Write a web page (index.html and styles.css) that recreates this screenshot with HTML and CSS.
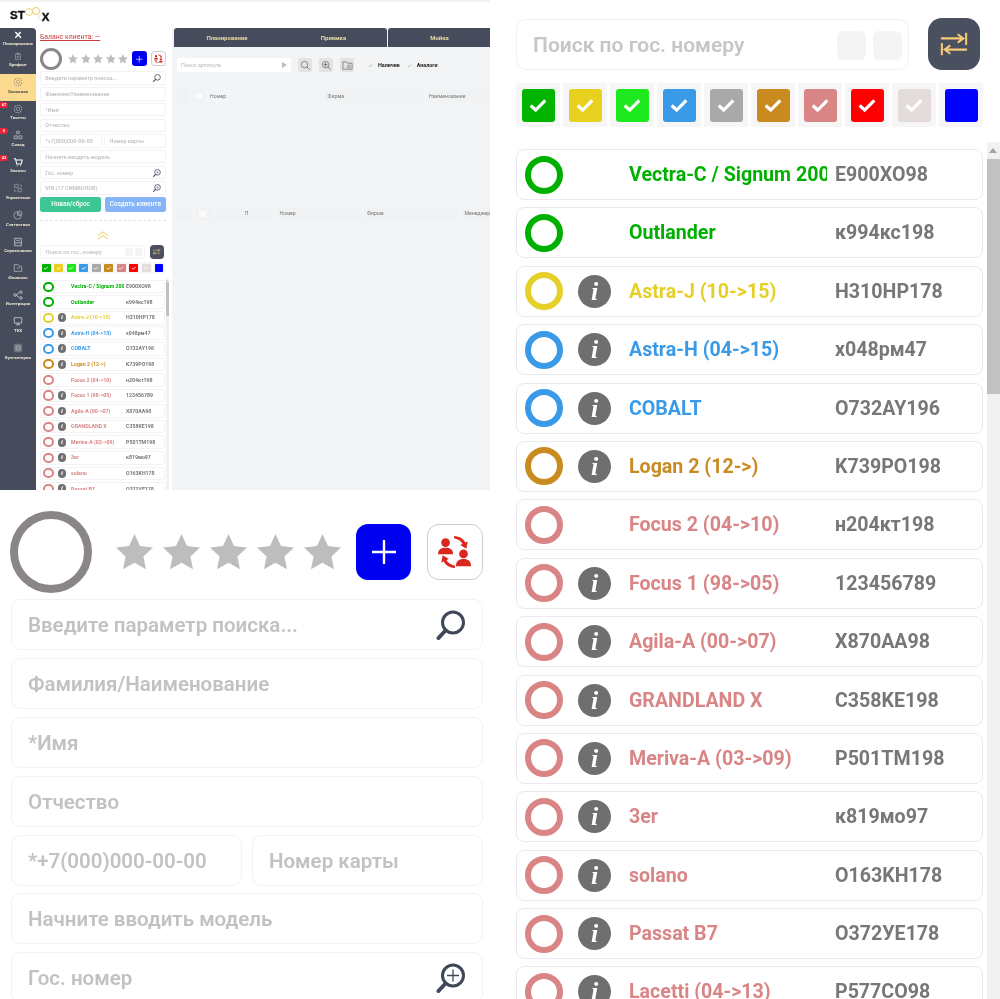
FILE: index.html
```html
<!DOCTYPE html>
<html lang="ru">
<head>
<meta charset="utf-8">
<title>STOOX</title>
<link rel="stylesheet" href="styles.css">
</head>
<body>
<svg class="sprite" aria-hidden="true">
  <symbol id="i-star" viewBox="1.200 1.500 21.600 21.600"><path d="M12 1.500l3.200 7 7.600.9-5.600 5.200 1.500 7.500-6.700-3.800-6.700 3.800 1.500-7.500L1.200 9.400l7.600-.9z"/></symbol>
  <symbol id="i-search" viewBox="0 0 30 30"><circle cx="17" cy="12.500" r="10.500" fill="none" stroke="#3f4759" stroke-width="3"/><path d="M9.500 20.500L2.500 28" stroke="#3f4759" stroke-width="4" stroke-linecap="round"/></symbol>
  <symbol id="i-search-plus" viewBox="0 0 30 30"><circle cx="17" cy="12.500" r="10.500" fill="none" stroke="#3f4759" stroke-width="3"/><path d="M9.500 20.500L2.500 28" stroke="#3f4759" stroke-width="4" stroke-linecap="round"/><path d="M17 6.500v12M11 12.500h12" stroke="#3f4759" stroke-width="1.300"/></symbol>
  <symbol id="i-plus" viewBox="0 0 24 24"><path d="M12 3v18M3 12h18" stroke="#fff" stroke-width="1.800" fill="none"/></symbol>
  <symbol id="i-users" viewBox="0 0 36 36"><g fill="#d9281e"><circle cx="8" cy="8" r="4.600"/><path d="M0 20.500c0-5 3-7 8-7s8 2 8 7z"/><circle cx="27" cy="20" r="4.600"/><path d="M19 33c0-5 3-7.500 8-7.500s8 2.500 8 7.500z"/><path d="M17 1c6 .5 10 3 12 7l2.500-1L30 14.500l-6.500-4 2.500-1C24.500 6.500 21.500 4.500 17 3.500z"/><path d="M18 35c-6-.5-10-3-12-7l-2.500 1L5 21.500l6.500 4-2.500 1c1.500 3 4.500 5 9 6z"/></g></symbol>
  <symbol id="i-swap" viewBox="0 0 30 30"><g stroke="#f6c877" fill="none" stroke-width="2.200"><path d="M1 9h24M19 4.500l6 4.500-6 4.500"/><path d="M28 3v13"/><path d="M29 21H5M11 16.500L5 21l6 4.500"/><path d="M2 14v13"/></g></symbol>
  <symbol id="i-check" viewBox="0 0 24 24"><path d="M4 12.500l5.500 5L20 7" fill="none" stroke="currentColor" stroke-width="3.500"/></symbol>
  <symbol id="i-chev" viewBox="0 0 24 18"><path d="M2 9l10-7 10 7M2 16l10-7 10 7" fill="none" stroke="#f6d78f" stroke-width="2.500"/></symbol>
  <symbol id="n-tools" viewBox="0 0 24 24"><path d="M4 3l17 17M20 3L4 20" stroke="#fff" stroke-width="4.500" fill="none"/></symbol>
  <symbol id="n-doc" viewBox="0 0 24 24"><path d="M5 5h14v16H5zM9 3h6v4H9zM8 12h8M8 16h8" fill="none" stroke="#9ca0a8" stroke-width="1.800"/></symbol>
  <symbol id="n-gear" viewBox="0 0 24 24"><circle cx="12" cy="12" r="4" fill="none" stroke="currentColor" stroke-width="1.800"/><circle cx="12" cy="12" r="9" fill="none" stroke="currentColor" stroke-width="2.500" stroke-dasharray="3.500 2"/></symbol>
  <symbol id="n-stock" viewBox="0 0 24 24"><path d="M9 3h6v6H9zM3 14h7v7H3zM14 14h7v7h-7z" fill="none" stroke="#c3c5ca" stroke-width="1.800"/></symbol>
  <symbol id="n-cart" viewBox="0 0 24 24"><path d="M2 4h4l3 13h11l2-10H7M9 21h2M17 21h2" fill="none" stroke="#fff" stroke-width="2.500"/></symbol>
  <symbol id="n-manage" viewBox="0 0 24 24"><path d="M4 3h8v8H4zM12 13h8v8h-8zM16 5h4v5M4 15v5h4" fill="none" stroke="#9ca0a8" stroke-width="1.800"/></symbol>
  <symbol id="n-pie" viewBox="0 0 24 24"><path d="M11 4a9 9 0 1 0 9 9h-9zM14 2a8 8 0 0 1 8 8h-8z" fill="none" stroke="#b4b7bd" stroke-width="1.800"/></symbol>
  <symbol id="n-book" viewBox="0 0 24 24"><path d="M4 3h16v18H4zM8 8h8M4 14h16" fill="none" stroke="#c3c5ca" stroke-width="2"/></symbol>
  <symbol id="n-folder" viewBox="0 0 24 24"><path d="M3 20V4h10l3 4h5v12zM9 12h8" fill="none" stroke="#b4b7bd" stroke-width="1.800"/></symbol>
  <symbol id="n-share" viewBox="0 0 24 24"><g fill="none" stroke="#d4d6da" stroke-width="1.800"><circle cx="5" cy="12" r="3"/><circle cx="19" cy="5" r="3"/><circle cx="19" cy="19" r="3"/><path d="M8 11l8-5M8 13l8 5"/></g></symbol>
  <symbol id="n-screen" viewBox="0 0 24 24"><path d="M3 4h18v13H3zM12 17v4M7 21h10" fill="none" stroke="#d4d6da" stroke-width="1.800"/></symbol>
  <symbol id="n-calc" viewBox="0 0 24 24"><rect x="2" y="2" width="20" height="20" rx="4" fill="#71767f"/><circle cx="12" cy="12" r="5" fill="none" stroke="#b5b8bc" stroke-width="2"/></symbol>
  <symbol id="t-zoom" viewBox="0 0 24 24"><circle cx="10" cy="10" r="7" fill="none" stroke="#666" stroke-width="1.600"/><path d="M15 15l6 6" stroke="#666" stroke-width="1.800"/></symbol>
  <symbol id="t-zoomp" viewBox="0 0 24 24"><circle cx="10" cy="10" r="7" fill="none" stroke="#666" stroke-width="1.600"/><path d="M15 15l6 6M10 6v8M6 10h8" stroke="#666" stroke-width="1.800"/></symbol>
  <symbol id="t-folder" viewBox="0 0 24 24"><path d="M2 20V4h8l2 3h10v13zM12 14a3 3 0 1 0 6 0 3 3 0 0 0-6 0" fill="none" stroke="#666" stroke-width="1.500"/></symbol>
</svg>

<div class="sheet">
  <div class="left-col">
    <section class="panel overview">
      <header class="app-head">
        <div class="logo"><span>ST</span><i class="logo-o"></i><i class="logo-o logo-o2"></i><i class="logo-o logo-o3"></i><span class="logo-x">X</span></div>
      </header>
      <div class="app-body">
        <nav class="side">
          <a class="nav first"><svg class="nav-i"><use href="#n-tools"/></svg><span>Планирование</span></a>
          <a class="nav second"><svg class="nav-i"><use href="#n-doc"/></svg><span>Брифинг</span></a>
          <a class="nav active"><svg class="nav-i"><use href="#n-gear"/></svg><span>Основная</span></a>
          <a class="nav"><b class="badge">67</b><svg class="nav-i"><use href="#n-gear"/></svg><span>Тикеты</span></a>
          <a class="nav"><b class="badge">6</b><svg class="nav-i"><use href="#n-stock"/></svg><span>Склад</span></a>
          <a class="nav"><b class="badge">43</b><svg class="nav-i"><use href="#n-cart"/></svg><span>Заказы</span></a>
          <a class="nav"><svg class="nav-i"><use href="#n-manage"/></svg><span>Управление</span></a>
          <a class="nav"><svg class="nav-i"><use href="#n-pie"/></svg><span>Статистика</span></a>
          <a class="nav"><svg class="nav-i"><use href="#n-book"/></svg><span>Справочники</span></a>
          <a class="nav"><svg class="nav-i"><use href="#n-folder"/></svg><span>Финансы</span></a>
          <a class="nav"><svg class="nav-i"><use href="#n-share"/></svg><span>Интеграции</span></a>
          <a class="nav"><svg class="nav-i"><use href="#n-screen"/></svg><span>ТЕХ</span></a>
          <a class="nav"><svg class="nav-i"><use href="#n-calc"/></svg><span>Бухгалтерия</span></a>
        </nav>

        <div class="client">
          <a class="balance">Баланс клиента: —</a>
          <div class="form tiny">
            <div class="form-top">
              <div class="big-ring"></div>
              <div class="stars"><svg><use href="#i-star"/></svg><svg><use href="#i-star"/></svg><svg><use href="#i-star"/></svg><svg><use href="#i-star"/></svg><svg><use href="#i-star"/></svg></div>
              <div class="btn-plus"><svg><use href="#i-plus"/></svg></div>
              <div class="btn-users"><svg><use href="#i-users"/></svg></div>
            </div>
            <div class="field"><span>Введите параметр поиска...</span><svg class="f-icon"><use href="#i-search"/></svg></div>
            <div class="field"><span>Фамилия/Наименование</span></div>
            <div class="field"><span>*Имя</span></div>
            <div class="field"><span>Отчество</span></div>
            <div class="field-pair"><div class="field"><span>*+7(000)000-00-00</span></div><div class="field"><span>Номер карты</span></div></div>
            <div class="field"><span>Начните вводить модель</span></div>
            <div class="field"><span>Гос. номер</span><svg class="f-icon"><use href="#i-search-plus"/></svg></div>
            <div class="field"><span>VIN (17 СИМВОЛОВ)</span><svg class="f-icon"><use href="#i-search-plus"/></svg></div>
            <div class="actions"><div class="act act-green">Новая/сброс</div><div class="act act-blue">Создать клиента</div></div>
          </div>
          <div class="divider"></div>
          <svg class="chev"><use href="#i-chev"/></svg>
          <div class="plates tiny short">
            <div class="plate-search">
              <div class="plate-input"><span>Поиск по гос. номеру</span><i class="sq"></i><i class="sq"></i></div>
              <div class="btn-swap"><svg><use href="#i-swap"/></svg></div>
            </div>
            <div class="swatches">
              <div class="cell"><i class="sw s1"><svg><use href="#i-check"/></svg></i></div>
              <div class="cell"><i class="sw s2"><svg><use href="#i-check"/></svg></i></div>
              <div class="cell"><i class="sw s3"><svg><use href="#i-check"/></svg></i></div>
              <div class="cell"><i class="sw s4"><svg><use href="#i-check"/></svg></i></div>
              <div class="cell"><i class="sw s5"><svg><use href="#i-check"/></svg></i></div>
              <div class="cell"><i class="sw s6"><svg><use href="#i-check"/></svg></i></div>
              <div class="cell"><i class="sw s7"><svg><use href="#i-check"/></svg></i></div>
              <div class="cell"><i class="sw s8"><svg><use href="#i-check"/></svg></i></div>
              <div class="cell"><i class="sw s9"><svg><use href="#i-check"/></svg></i></div>
              <div class="cell"><i class="sw s10"></i></div>
            </div>
            <div class="list-wrap">
              <div class="list">
                <div class="row c1"><i class="ring"></i><i class="info none">i</i><span class="name">Vectra-C / Signum 2002</span><span class="num">E900XO98</span></div>
                <div class="row c1"><i class="ring"></i><i class="info none">i</i><span class="name">Outlander</span><span class="num">к994кс198</span></div>
                <div class="row c2"><i class="ring"></i><i class="info">i</i><span class="name">Astra-J (10-&gt;15)</span><span class="num">H310HP178</span></div>
                <div class="row c4"><i class="ring"></i><i class="info">i</i><span class="name">Astra-H (04-&gt;15)</span><span class="num">x048рм47</span></div>
                <div class="row c4"><i class="ring"></i><i class="info">i</i><span class="name">COBALT</span><span class="num">O732AY196</span></div>
                <div class="row c6"><i class="ring"></i><i class="info">i</i><span class="name">Logan 2 (12-&gt;)</span><span class="num">K739PO198</span></div>
                <div class="row c7"><i class="ring"></i><i class="info none">i</i><span class="name">Focus 2 (04-&gt;10)</span><span class="num">н204кт198</span></div>
                <div class="row c7"><i class="ring"></i><i class="info">i</i><span class="name">Focus 1 (98-&gt;05)</span><span class="num">123456789</span></div>
                <div class="row c7"><i class="ring"></i><i class="info">i</i><span class="name">Agila-A (00-&gt;07)</span><span class="num">X870AA98</span></div>
                <div class="row c7"><i class="ring"></i><i class="info">i</i><span class="name">GRANDLAND X</span><span class="num">C358KE198</span></div>
                <div class="row c7"><i class="ring"></i><i class="info">i</i><span class="name">Meriva-A (03-&gt;09)</span><span class="num">P501TM198</span></div>
                <div class="row c7"><i class="ring"></i><i class="info">i</i><span class="name">3er</span><span class="num">к819мо97</span></div>
                <div class="row c7"><i class="ring"></i><i class="info">i</i><span class="name">solano</span><span class="num">O163KH178</span></div>
                <div class="row c7"><i class="ring"></i><i class="info">i</i><span class="name">Passat B7</span><span class="num">O372УЕ178</span></div>
              </div>
              <div class="scroll"><i class="arrow"></i><i class="thumb"></i></div>
            </div>
          </div>
        </div>

        <main class="main">
          <div class="tabs">
            <div class="tab tab-a">Планирование</div>
            <div class="tab tab-b">Приемка</div>
            <div class="tab tab-c">Мойка</div>
          </div>
          <div class="tools">
            <div class="art"><span>Поиск артикула</span><i class="play"></i></div>
            <div class="tool"><svg><use href="#t-zoom"/></svg></div>
            <div class="tool"><svg><use href="#t-zoomp"/></svg></div>
            <div class="tool"><svg><use href="#t-folder"/></svg></div>
            <label class="opt"><svg><use href="#i-check"/></svg>Наличие</label>
            <label class="opt"><svg><use href="#i-check"/></svg>Аналоги</label>
          </div>
          <div class="thead one">
            <div class="th w12"></div>
            <div class="th w12"><i class="box"></i></div>
            <div class="th w116 tint">Номер</div>
            <div class="th w99">Фирма</div>
            <div class="th wrest">Наименование</div>
          </div>
          <div class="thead two">
            <div class="th w16"></div>
            <div class="th w18"><i class="box"></i></div>
            <div class="th w58 center">П</div>
            <div class="th w85">Номер</div>
            <div class="th w95">Фирма</div>
            <div class="th wrest">Менеджер</div>
          </div>
        </main>
      </div>
    </section>

    <section class="panel client-zoom">
      <div class="form">
        <div class="form-top">
          <div class="big-ring"></div>
          <div class="stars"><svg><use href="#i-star"/></svg><svg><use href="#i-star"/></svg><svg><use href="#i-star"/></svg><svg><use href="#i-star"/></svg><svg><use href="#i-star"/></svg></div>
          <div class="btn-plus"><svg><use href="#i-plus"/></svg></div>
          <div class="btn-users"><svg><use href="#i-users"/></svg></div>
        </div>
        <div class="field"><span>Введите параметр поиска...</span><svg class="f-icon"><use href="#i-search"/></svg></div>
        <div class="field"><span>Фамилия/Наименование</span></div>
        <div class="field"><span>*Имя</span></div>
        <div class="field"><span>Отчество</span></div>
        <div class="field-pair"><div class="field"><span>*+7(000)000-00-00</span></div><div class="field"><span>Номер карты</span></div></div>
        <div class="field"><span>Начните вводить модель</span></div>
        <div class="field"><span>Гос. номер</span><svg class="f-icon"><use href="#i-search-plus"/></svg></div>
      </div>
    </section>
  </div>

  <section class="panel plates-zoom">
    <div class="plates">
      <div class="plate-search">
        <div class="plate-input"><span>Поиск по гос. номеру</span><i class="sq"></i><i class="sq"></i></div>
        <div class="btn-swap"><svg><use href="#i-swap"/></svg></div>
      </div>
      <div class="swatches">
        <div class="cell"><i class="sw s1"><svg><use href="#i-check"/></svg></i></div>
        <div class="cell"><i class="sw s2"><svg><use href="#i-check"/></svg></i></div>
        <div class="cell"><i class="sw s3"><svg><use href="#i-check"/></svg></i></div>
        <div class="cell"><i class="sw s4"><svg><use href="#i-check"/></svg></i></div>
        <div class="cell"><i class="sw s5"><svg><use href="#i-check"/></svg></i></div>
        <div class="cell"><i class="sw s6"><svg><use href="#i-check"/></svg></i></div>
        <div class="cell"><i class="sw s7"><svg><use href="#i-check"/></svg></i></div>
        <div class="cell"><i class="sw s8"><svg><use href="#i-check"/></svg></i></div>
        <div class="cell"><i class="sw s9"><svg><use href="#i-check"/></svg></i></div>
        <div class="cell"><i class="sw s10"></i></div>
      </div>
      <div class="list-wrap">
        <div class="list">
          <div class="row c1"><i class="ring"></i><i class="info none">i</i><span class="name">Vectra-C / Signum 2002</span><span class="num">E900XO98</span></div>
          <div class="row c1"><i class="ring"></i><i class="info none">i</i><span class="name">Outlander</span><span class="num">к994кс198</span></div>
          <div class="row c2"><i class="ring"></i><i class="info">i</i><span class="name">Astra-J (10-&gt;15)</span><span class="num">H310HP178</span></div>
          <div class="row c4"><i class="ring"></i><i class="info">i</i><span class="name">Astra-H (04-&gt;15)</span><span class="num">x048рм47</span></div>
          <div class="row c4"><i class="ring"></i><i class="info">i</i><span class="name">COBALT</span><span class="num">O732AY196</span></div>
          <div class="row c6"><i class="ring"></i><i class="info">i</i><span class="name">Logan 2 (12-&gt;)</span><span class="num">K739PO198</span></div>
          <div class="row c7"><i class="ring"></i><i class="info none">i</i><span class="name">Focus 2 (04-&gt;10)</span><span class="num">н204кт198</span></div>
          <div class="row c7"><i class="ring"></i><i class="info">i</i><span class="name">Focus 1 (98-&gt;05)</span><span class="num">123456789</span></div>
          <div class="row c7"><i class="ring"></i><i class="info">i</i><span class="name">Agila-A (00-&gt;07)</span><span class="num">X870AA98</span></div>
          <div class="row c7"><i class="ring"></i><i class="info">i</i><span class="name">GRANDLAND X</span><span class="num">C358KE198</span></div>
          <div class="row c7"><i class="ring"></i><i class="info">i</i><span class="name">Meriva-A (03-&gt;09)</span><span class="num">P501TM198</span></div>
          <div class="row c7"><i class="ring"></i><i class="info">i</i><span class="name">3er</span><span class="num">к819мо97</span></div>
          <div class="row c7"><i class="ring"></i><i class="info">i</i><span class="name">solano</span><span class="num">O163KH178</span></div>
          <div class="row c7"><i class="ring"></i><i class="info">i</i><span class="name">Passat B7</span><span class="num">O372УЕ178</span></div>
          <div class="row c7"><i class="ring"></i><i class="info">i</i><span class="name">Lacetti (04-&gt;13)</span><span class="num">P577CO98</span></div>
        </div>
        <div class="scroll"><i class="arrow"></i><i class="thumb"></i></div>
      </div>
    </div>
  </section>
</div>
</body>
</html>
```

FILE: styles.css
```css
* { box-sizing: border-box; }
html, body { margin: 0; padding: 0; background: #fff; }
body { font-family: Roboto, "Noto Sans", sans-serif; overflow: hidden; }
i { font-style: normal; }
.sprite { position: absolute; width: 0; height: 0; }

.sheet { display: grid; grid-template-columns: 490px 510px; width: 1000px; height: 999px; overflow: hidden; }
.left-col { display: grid; grid-template-rows: 490px 509px; min-width: 0; }
.panel { overflow: hidden; background: #fff; min-width: 0; filter: blur(.45px); }
.overview { filter: blur(.55px); }

/* Overview screenshot */
.overview { display: flex; flex-direction: column; }
.app-head { height: 28px; flex: none; border-top: 2px solid #f3f3f4; padding: 6px 0 0 10px; }
.logo { display: flex; align-items: center; height: 14px; font: 700 11.500px/14px "Liberation Sans", sans-serif; color: #111; -webkit-text-stroke: .4px #111; }
.logo-o { width: 8px; height: 8px; border: 1.300px solid #eed27e; border-radius: 50%; margin: -6px -1px 0 0; flex: none; }
.logo-o2 { margin-top: -9px; border-color: #efc96b; }
.logo-o3 { margin: 3px -2px 0 -1px; width: 6px; height: 6px; border-color: #dfe1e4; }
.logo-x { margin: 3px 0 0 0; }
.app-body { flex: 1; display: flex; min-height: 0; }

.side { width: 36px; flex: none; background: #474c5c; border-radius: 0 4px 0 0; display: flex; flex-direction: column; }
.nav { position: relative; height: 26.600px; flex: none; display: flex; flex-direction: column; align-items: center; justify-content: flex-end; padding-bottom: 7px; color: #9ca0a8; }
.nav span { font-size: 4.400px; line-height: 5px; font-weight: 700; color: #e8e2cf; white-space: nowrap; }
.nav.first { height: 24px; padding-bottom: 6.500px; }
.nav.first .nav-i { width: 8px; height: 8px; }
.nav.second { height: 22px; }
.nav-i { width: 10px; height: 10px; margin-bottom: 1.500px; }
.nav.active { background: #fbd98f; color: #a99f87; }
.nav.active span { color: #55534d; }
.badge { position: absolute; left: 0; top: 1px; min-width: 8px; height: 6px; padding: 0 1px; border-radius: 0 3px 3px 0; background: #e8253a; color: #fff; font-size: 4px; line-height: 6px; text-align: center; }

.client { width: 136px; flex: none; padding: 4px 0 0 4px; overflow: hidden; }
.balance { display: block; height: 16px; font-size: 6.900px; line-height: 10px; color: #c84040; text-decoration: underline; white-space: nowrap; }
.tiny { zoom: .2667; }
.tiny .big-ring { border-width: 11.300px; }
.tiny .ring { border-width: 7.600px; }
.tiny .row, .tiny .field, .tiny .plate-input { border-color: #f3f3f7; }
.divider { width: 126px; height: 0; margin-top: 8px; border-top: 1px dashed #dfe3ea; }
.chev { display: block; width: 12px; height: 9px; margin: 10px 0 5px 57px; }
.plates.tiny { margin-left: 1px; }

.main { flex: 1; min-width: 0; background: #f3f4f5; padding-left: 2px; overflow: hidden; }
.tabs { display: flex; height: 19px; }
.tab { background: #474c5c; color: #e7d9a4; font-size: 6px; font-weight: 700; line-height: 19px; text-align: center; flex: none; }
.tab-a { width: 106px; border-radius: 3px 0 0 0; }
.tab-b { width: 107px; border-radius: 0 3px 0 0; }
.tab-c { width: 103px; margin-left: 1px; border-radius: 3px 0 0 0; }
.tools { display: flex; align-items: center; height: 14px; margin: 11px 0 0 3px; }
.art { width: 114px; height: 14px; background: #fff; display: flex; align-items: center; justify-content: space-between; padding: 0 4px; font-size: 5.400px; color: #b9b9b9; border-radius: 2px; }
.play { width: 0; height: 0; border-left: 5px solid #bdbdbd; border-top: 3px solid transparent; border-bottom: 3px solid transparent; }
.tool { width: 14px; height: 14px; background: #e3e3e4; border-radius: 2px; margin-left: 7px; display: flex; align-items: center; justify-content: center; }
.tool svg { width: 11px; height: 11px; }
.opt { display: flex; align-items: center; font-size: 5.400px; font-weight: 700; margin-left: 7px; white-space: nowrap; color: #1a1a1a; }
.opt svg { width: 5px; height: 5px; color: #64c9a4; margin-right: 5px; }
.opt:nth-of-type(1) { margin-left: 14px; }
.thead { display: flex; gap: 2.500px; margin-left: 3px; font-size: 5.200px; color: #777; white-space: nowrap; }
.thead.one { height: 12px; margin-top: 18px; line-height: 12px; }
.thead.two { height: 13px; margin-top: 105px; line-height: 13px; }
.th { background: #f0f2f4; padding-left: 3px; flex: none; display: flex; align-items: center; justify-content: flex-start; }
.w12 { width: 12px; }
.w16 { width: 16px; }
.w18 { width: 18px; }
.w58 { width: 58px; }
.w85 { width: 85px; }
.w95 { width: 95px; }
.w99 { width: 99px; }
.w116 { width: 116px; }
.wrest { width: 90px; }
.tint { background: #f1f6fb; padding-left: 4px; }
.center { justify-content: center; }
.box { display: block; width: 7px; height: 6px; background: #fbfbfb; }

/* Client form */
.form { width: 472px; }
.form-top { display: flex; align-items: center; height: 82px; margin-bottom: 6px; margin-left: -1px; }
.big-ring { width: 82px; height: 82px; border: 8px solid #8a8685; border-radius: 50%; flex: none; margin-right: 24px; }
.stars { display: flex; gap: 10px; margin-right: 15px; }
.stars svg { width: 37px; height: 37px; fill: #bdbdbd; display: block; }
.btn-plus { width: 55px; height: 56px; background: #0000f0; border-radius: 12px; margin-right: 16px; display: flex; align-items: center; justify-content: center; flex: none; }
.btn-plus svg { width: 32px; height: 32px; }
.btn-users { width: 56px; height: 56px; background: #fff; border: 1.500px solid #cdcdcd; border-radius: 12px; display: flex; align-items: center; justify-content: center; flex: none; }
.btn-users svg { width: 34px; height: 36px; }
.field { height: 51px; margin-bottom: 7.900px; padding: 1px 16px 0 16px; border: 1.500px solid #f2f2f3; border-radius: 9px; display: flex; align-items: center; justify-content: space-between; font-size: 20.500px; font-weight: 600; color: #c2c2c2; white-space: nowrap; background: #fff; }
.f-icon { width: 30px; height: 30px; flex: none; }
.field-pair { display: flex; gap: 10px; }
.field-pair .field:first-child { width: 231px; flex: none; }
.field-pair .field:last-child { flex: 1; }
.actions { display: flex; gap: 14px; }
.act { flex: 1; height: 56px; border-radius: 8px; color: #fff; font-size: 24px; font-weight: 500; line-height: 56px; text-align: center; white-space: nowrap; }
.act-green { background: #3ec795; }
.act-blue { background: #85b5f8; }

/* Plate list */
.plates { width: 484px; }
.plate-search { display: flex; align-items: center; width: 464px; height: 52px; }
.plate-input { width: 393px; height: 51px; border: 1.500px solid #f0f0f2; border-radius: 10px; display: flex; align-items: center; padding: 1px 6px 0 16px; font-size: 21px; font-weight: 600; color: #c6c6c6; white-space: nowrap; }
.plate-input span { flex: 1; }
.sq { width: 29px; height: 29px; background: #f4f4f4; border-radius: 6px; margin-left: 7px; flex: none; }
.btn-swap { width: 52px; height: 52px; margin-left: 19px; background: #4a5060; border-radius: 14px; display: flex; align-items: center; justify-content: center; flex: none; }
.btn-swap svg { width: 28px; height: 28px; }
.swatches { display: flex; gap: 3px; margin-top: 13px; }
.cell { width: 44px; height: 44px; background: #f6f6f7; display: flex; align-items: center; justify-content: center; flex: none; }
.sw { width: 33px; height: 33px; border-radius: 3px; color: #fff; display: flex; align-items: center; justify-content: center; }
.sw svg { width: 22px; height: 22px; }
.s1 { background: #00b400; }
.s2 { background: #e8d01f; }
.s3 { background: #1ee81e; }
.s4 { background: #3a9ae8; }
.s5 { background: #a9a9a9; }
.s6 { background: #c98b20; }
.s7 { background: #d98586; }
.s8 { background: #ff0000; }
.s9 { background: #e3dcda; }
.s10 { background: #0000ff; }
.list-wrap { display: flex; gap: 4px; margin-top: 15px; }
.list { width: 467px; padding-top: 7px; flex: none; display: flex; flex-direction: column; gap: 7.400px; }
.row { height: 51px; flex: none; border: 1.500px solid #e8e9f1; border-radius: 8px; display: flex; align-items: center; padding: 1px 0 0 8px; background: #fff; font-size: 19.600px; font-weight: 700; line-height: 26px; white-space: nowrap; }
.ring { width: 38px; height: 38px; border: 6px solid currentColor; border-radius: 50%; flex: none; margin: -1px 15px 0 0; }
.info { width: 33px; height: 33px; border-radius: 50%; background: #6f6f6f; color: #fff; font: italic 700 26px/33px "Liberation Serif", serif; text-align: center; flex: none; margin: -1px 18px 0 0; }
.info.none { visibility: hidden; }
.name { width: 198px; overflow: hidden; flex: none; margin-right: 8px; }
.num { color: #777; }
.c1 { color: #00b000; }
.c2 { color: #e5d02a; }
.c4 { color: #3a9ae8; }
.c6 { color: #c98b20; }
.c7 { color: #d98586; }
.scroll { width: 13px; flex: none; background: #f1f1f1; height: 900px; position: relative; }
.arrow { position: absolute; left: 2px; top: 6px; width: 0; height: 0; border-left: 4.500px solid transparent; border-right: 4.500px solid transparent; border-bottom: 5px solid #a3a3a3; }
.thumb { position: absolute; left: 0; top: 17px; width: 13px; height: 235px; background: #c1c1c1; }
.short .thumb { height: 124px; }

.client-zoom { padding: 21px 0 0 11px; }
.plates-zoom { padding: 18px 0 0 26px; }
.plates-zoom .plate-input { margin-top: 1px; }
```
